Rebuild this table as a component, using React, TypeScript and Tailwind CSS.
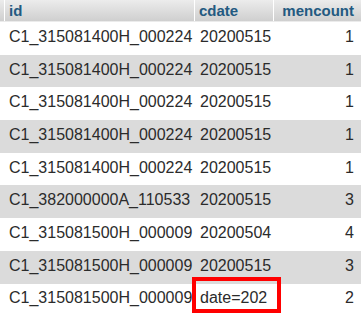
const ROWS = [
	{ id: 'C1_315081400H_000224', cdate: '20200515', mencount: 1 },
	{ id: 'C1_315081400H_000224', cdate: '20200515', mencount: 1 },
	{ id: 'C1_315081400H_000224', cdate: '20200515', mencount: 1 },
	{ id: 'C1_315081400H_000224', cdate: '20200515', mencount: 1 },
	{ id: 'C1_315081400H_000224', cdate: '20200515', mencount: 1 },
	{ id: 'C1_382000000A_110533', cdate: '20200515', mencount: 3 },
	{ id: 'C1_315081500H_000009', cdate: '20200504', mencount: 4 },
	{ id: 'C1_315081500H_000009', cdate: '20200515', mencount: 3 },
	{ id: 'C1_315081500H_000009', cdate: 'date=202', mencount: 2 },
];

export default function App() {
	return (
		<div
			className="relative w-[361px] h-[316px] overflow-hidden bg-white text-[#2b2b2b]"
			style={{ fontFamily: "'Liberation Sans', Arial, sans-serif" }}
		>
			{/* Header */}
			<div className="grid grid-cols-[194px_79px_88px] h-[22px] bg-gradient-to-b from-[#ececec] to-[#cfcfcf] border-b border-[#ebebeb] text-[15px] font-bold text-[#235a81] leading-[21px]">
				<div className="ml-[4px] border-l border-white pl-[4px]">id</div>
				<div className="border-l border-white pl-[4px]">cdate</div>
				<div className="border-l border-white pr-[7px] text-right">mencount</div>
			</div>

			{/* Rows */}
			{ROWS.map((r, i) => (
				<div
					key={i}
					className={`grid grid-cols-[194px_79px_88px] h-[32.7px] items-center text-[16px] leading-none pb-[3px] ${i % 2 === 1 ? 'bg-[#dbdbdb]' : 'bg-white'}`}
				>
					<div className="pl-[9px] whitespace-nowrap">{r.id}</div>
					<div className="pl-[6px] whitespace-nowrap">{r.cdate}</div>
					<div className="pr-[7px] text-right">{r.mencount}</div>
				</div>
			))}

			{/* Highlight box */}
			<div className="absolute left-[192px] top-[277px] w-[89px] h-[36px] border-4 border-[#ff0000]" />
		</div>
	);
}
